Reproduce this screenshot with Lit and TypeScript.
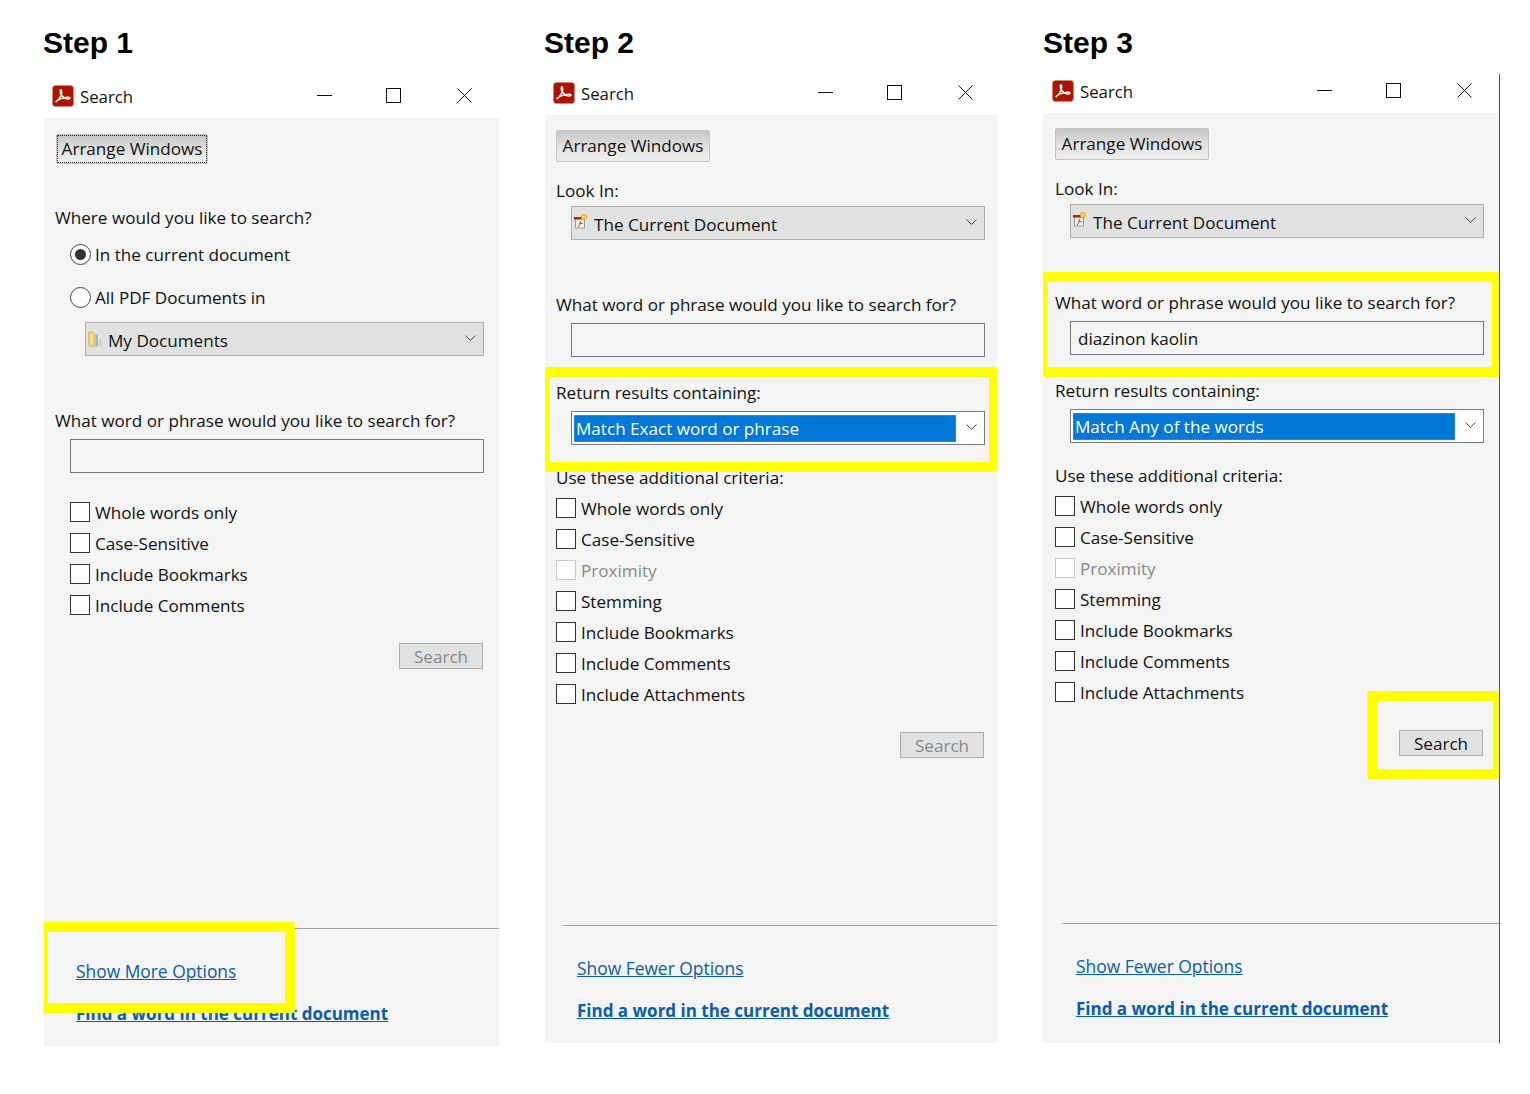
import { LitElement, html, css } from "lit";
import { customElement } from "lit/decorators.js";

const pdfLogo = html`<svg class="logo" viewBox="0 0 22 22" aria-hidden="true">
  <rect x="0.5" y="0.5" width="21" height="21" rx="3" fill="#b01200" stroke="#c9857e" stroke-width="0.6"/>
  <path d="M4 16.500c2.200-1.200 4-3.800 5.300-7 .6-1.600.7-4.600-.4-4.700-1-.1-.9 2.600.1 4.300 1.500 2.800 3.600 4.300 5.600 4.700 1.600.3 3.600.1 3.400-.9-.2-.9-3.200-.9-6.200-.2-3 .7-5.800 1.800-6.900 3.200-.5.7-.9 1-.9.600z" fill="none" stroke="#fff" stroke-width="1.400" stroke-linejoin="round"/>
</svg>`;

const chevron = html`<svg class="chev" viewBox="0 0 11 6" aria-hidden="true"><path d="M.5.5 5.500 5.400 10.500.5" fill="none" stroke="#444" stroke-width="1"/></svg>`;

const docIcon = html`<svg class="mini doc" viewBox="0 0 14 15" aria-hidden="true">
  <rect x="1.500" y="4.500" width="9" height="9.500" fill="#f4efe8" stroke="#9a9a9a" stroke-width="1"/>
  <path d="M4 13c1.500-1 2.200-3 2.500-6M5 9.500h4" fill="none" stroke="#cf4a3e" stroke-width="1"/>
  <rect x="0" y="3" width="8" height="2.500" fill="#b3201a"/>
  <circle cx="10" cy="3" r="2.700" fill="#f8d93c" stroke="#e8963a" stroke-width="0.900"/>
</svg>`;

const folderIcon = html`<svg class="mini" viewBox="0 0 14 16" aria-hidden="true">
  <path d="M0.500 1h4.500l1.500 1.500V15.500H2L0.500 14z" fill="#e9cf84" stroke="#d4b568" stroke-width="0.800"/>
  <rect x="3" y="3" width="1.500" height="10" fill="#f6e7b8"/>
  <rect x="7.500" y="3.500" width="2.500" height="12" fill="#a9b0b6"/>
  <rect x="11" y="8" width="2.500" height="7.500" fill="#c9cdd0"/>
</svg>`;

@customElement("win-check")
class WinCheck extends LitElement {
  static properties = { label: {}, off: { type: Boolean } };
  label = "";
  off = false;
  static styles = css`
    :host { display: flex; align-items: center; height: 31px; gap: 5px; color: #111; }
    .box { width: 18px; height: 18px; background: #fff; border: 1px solid #333; flex: none; }
    :host([off]) { color: #85898c; }
    :host([off]) .box { border-color: #c8c8c8; }
    span { position: relative; top: 1px; }
  `;
  render() {
    return html`<div class="box"></div><span>${this.label}</span>`;
  }
}

@customElement("win-window")
class WinWindow extends LitElement {
  static styles = css`
    :host { display: block; }
    .bar { display: flex; align-items: center; height: 44px; position: relative; }
    .logo { width: 22px; height: 22px; margin-left: var(--lg, 8px); flex: none; }
    .name { margin-left: 6px; font-size: 16.800px; color: #111; }
    .ctl { display: flex; align-items: center; margin-left: auto; position: relative; top: -1px; }
    .ctl svg { width: 15px; height: 15px; display: block; }
    .min { margin-right: 54px; }
    .max { margin-right: 56px; }
    .cls { margin-right: var(--cr, 27px); }
    .panel { background: #f4f4f4; display: flex; flex-direction: column; align-items: flex-start; height: var(--ph, 928px); padding-left: var(--pl, 11px); box-sizing: border-box; position: relative; }
  `;
  render() {
    return html`
      <div class="bar">
        ${pdfLogo}<span class="name">Search</span>
        <div class="ctl">
          <svg class="min" viewBox="0 0 15 15"><path d="M0 7.500h15" stroke="#111" stroke-width="1"/></svg>
          <svg class="max" viewBox="0 0 15 15"><rect x=".5" y=".5" width="14" height="14" fill="none" stroke="#111" stroke-width="1"/></svg>
          <svg class="cls" viewBox="0 0 15 15"><path d="M.5.5l14 14M14.500.5l-14 14" stroke="#111" stroke-width="1"/></svg>
        </div>
      </div>
      <div class="panel"><slot></slot></div>
    `;
  }
}

@customElement("app-root")
export class AppRoot extends LitElement {
  static styles = css`
    :host { display: block; position: relative; height: 1094px; width: 1530px; overflow: hidden; background: #fff; font-family: "Open Sans", "Noto Sans", sans-serif; font-size: 17.100px; color: #111; }
    .cols { display: flex; padding-left: 44px; }
    .col { flex: none; }
    .c1 { width: 455px; margin-right: 46px; --top: 13px; }
    .c2 { width: 452px; margin-right: 46px; --top: 10px; --cr: 24px; }
    .c3 { width: 456px; --top: 8px; --pl: 12px; --ph: 930px; --fb: 2px; --lg: 9px; position: relative; }
    h2 { margin: 25px 0 0 -1px; font: bold 30px/36px "Liberation Sans", Arial, sans-serif; color: #000; }
    .c3 h2 { margin-left: 0; }
    win-window { margin-top: var(--top); }
    .edge { position: absolute; left: 456px; top: 74px; height: 969px; width: 1px; background: #555; }

    .lab { height: 24px; line-height: 26px; white-space: nowrap; }
    .btn { box-sizing: border-box; height: 32px; width: 154px; margin-top: 15px; padding-bottom: 2px; border: 1px solid #c4c4c4; border-radius: 2px; background: linear-gradient(#c6c6c6, #e2e2e2 55%, #efefef); display: flex; align-items: center; justify-content: center; white-space: nowrap; }
    .btn.focus { height: 30px; width: 152px; margin: 16px 0 0 1px; outline: 1px dotted #222; outline-offset: -2px; }
    .combo { box-sizing: border-box; height: 34px; width: 414px; margin-left: 15px; border: 1px solid #adadad; background: #e1e1e1; display: flex; align-items: center; position: relative; }
    .combo .txt { white-space: nowrap; position: relative; top: 1px; }
    .mini { width: 14px; height: 16px; margin: 0 6px 0 2px; flex: none; position: relative; }
    .doc { height: 15px; top: -2px; }
    .chev { width: 11px; height: 6px; position: absolute; right: 7px; top: 12px; }
    .input { box-sizing: border-box; height: 34px; width: 414px; margin-left: 15px; border: 1px solid #7a7a7a; background: #f4f4f4; display: flex; align-items: center; padding-left: 7px; }
    .sel { background: #fff; border-color: #7a7a7a; }
    .hl { background: #0078d7; color: #fff; height: 27px; width: 382px; margin: 1px 0 0 2px; box-sizing: border-box; outline: 1px dotted #c87a20; outline-offset: -1px; line-height: 27px; padding-left: 2px; white-space: nowrap; }
    .srch { box-sizing: border-box; height: 26px; width: 84px; border: 1px solid #adadad; background: #e1e1e1; display: flex; align-items: center; justify-content: center; padding-top: 1px; color: #85898c; align-self: flex-end; margin-right: 16px; }
    .srch.on { color: #111; }
    .srch.c2s { margin-right: 13px; }
    .foot { margin-top: auto; margin-bottom: var(--fb, 0px); align-self: stretch; display: flex; flex-direction: column; height: 118px; box-sizing: border-box; position: relative; }
    .rule { height: 1px; background: #a0a0a0; box-shadow: 0 1px 0 #fff; margin-left: 7px; }
    .foot a { color: #0a5cad; text-decoration: underline; white-space: nowrap; display: block; height: 24px; line-height: 24px; margin-left: 21px; width: max-content; }
    .foot .more { margin-top: 30px; font-size: 17.400px; }
    .foot .find { margin-top: 19px; font-weight: 700; font-size: 17px; }

    .radio { display: flex; align-items: center; gap: 4px; height: 24px; margin-left: 15px; }
    .dot { box-sizing: border-box; width: 21px; height: 21px; border-radius: 50%; border: 1.500px solid #444; background: #fff; flex: none; display: flex; align-items: center; justify-content: center; }
    .dot.on::after { content: ""; width: 11px; height: 11px; border-radius: 50%; background: #333; }

    .y { position: absolute; box-sizing: border-box; border: 10px solid #ff0; border-radius: 3px; pointer-events: none; }
    .y1 { left: 44px; top: 922px; width: 251px; height: 91px; border-left-width: 4px; border-radius: 0 3px 3px 0; }
    .y2 { left: 545px; top: 367px; width: 452px; height: 105px; border-left-width: 5px; border-right-width: 8px; }
    .y3 { left: 1043px; top: 272px; width: 456px; height: 105px; border-left-width: 5px; border-right-width: 7px; }
    .y4 { left: 1367px; top: 691px; width: 132px; height: 88px; border-right-width: 6px; }

    .m3 { margin-top: 3px; } .m4 { margin-top: 4px; } .m7 { margin-top: 7px; } .m13 { margin-top: 13px; } .m16 { margin-top: 16px; }
    .m19 { margin-top: 19px; } .m20 { margin-top: 20px; } .m23 { margin-top: 23px; } .m41 { margin-top: 41px; } .m52 { margin-top: 52px; }
    .wide { width: 399px; margin-left: 30px; }
    .ind { margin-left: 15px; }
  `;

  private foot(more: string) {
    return html`<div class="foot">
      <div class="rule"></div>
      <a class="more" href="#">${more}</a>
      <a class="find" href="#">Find a word in the current document</a>
    </div>`;
  }

  private advanced(sel: string, query: string, searchClass: string) {
    return html`
      <div class="btn">Arrange Windows</div>
      <div class="lab m16">Look In:</div>
      <div class="combo m4">${docIcon}<span class="txt">The Current Document</span>${chevron}</div>
      <div class="lab m52">What word or phrase would you like to search for?</div>
      <div class="input m7">${query}</div>
      <div class="lab m23">Return results containing:</div>
      <div class="combo sel m7"><div class="hl">${sel}</div>${chevron}</div>
      <div class="lab m20">Use these additional criteria:</div>
      <win-check class="m3" label="Whole words only"></win-check>
      <win-check label="Case-Sensitive"></win-check>
      <win-check label="Proximity" off></win-check>
      <win-check label="Stemming"></win-check>
      <win-check label="Include Bookmarks"></win-check>
      <win-check label="Include Comments"></win-check>
      <win-check label="Include Attachments"></win-check>
      <div class="srch m23 ${searchClass}">Search</div>
    `;
  }

  render() {
    return html`
      <div class="cols">
        <div class="col c1">
          <h2>Step 1</h2>
          <win-window>
            <div class="btn focus">Arrange Windows</div>
            <div class="lab m41">Where would you like to search?</div>
            <div class="radio m13"><div class="dot on"></div><span>In the current document</span></div>
            <div class="radio m19"><div class="dot"></div><span>All PDF Documents in</span></div>
            <div class="combo wide m13">${folderIcon}<span class="txt">My Documents</span>${chevron}</div>
            <div class="lab m52">What word or phrase would you like to search for?</div>
            <div class="input m7"></div>
            <win-check class="m23 ind" label="Whole words only"></win-check>
            <win-check class="ind" label="Case-Sensitive"></win-check>
            <win-check class="ind" label="Include Bookmarks"></win-check>
            <win-check class="ind" label="Include Comments"></win-check>
            <div class="srch m23">Search</div>
            ${this.foot("Show More Options")}
          </win-window>
        </div>
        <div class="col c2">
          <h2>Step 2</h2>
          <win-window>
            ${this.advanced("Match Exact word or phrase", "", "c2s")}
            ${this.foot("Show Fewer Options")}
          </win-window>
        </div>
        <div class="col c3">
          <h2>Step 3</h2>
          <win-window>
            ${this.advanced("Match Any of the words", "diazinon kaolin", "on")}
            ${this.foot("Show Fewer Options")}
          </win-window>
          <div class="edge"></div>
        </div>
      </div>
      <div class="y y1"></div>
      <div class="y y2"></div>
      <div class="y y3"></div>
      <div class="y y4"></div>
    `;
  }
}
